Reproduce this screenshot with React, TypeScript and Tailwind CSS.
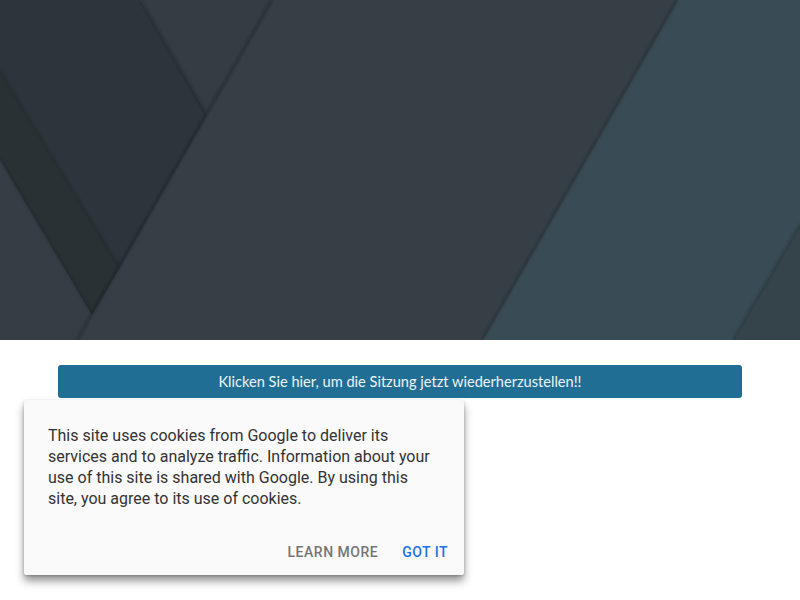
import React from "react";

function Hero() {
  return (
    <div className="w-full h-[340px] bg-[#353f45]">
      <svg width="100%" height="340" viewBox="0 0 800 340" preserveAspectRatio="none" className="block">
        <defs>
          <filter id="soft" x="-10%" y="-10%" width="120%" height="120%">
            <feGaussianBlur stdDeviation="1.5" />
          </filter>
        </defs>
        <rect x="0" y="0" width="800" height="340" fill="#353f45" />
        <polygon points="0,0 140,0 207,115 120,267 0,70" fill="#2c353b" />
        <polygon points="0,70 120,267 92,315 0,160" fill="#293135" />
        <polygon points="0,160 92,315 78,340 0,340" fill="#353e44" />
        <polygon points="140,0 273,0 207,115" fill="#343d43" />
        <polygon points="678,0 800,0 800,225 733,340 483,340" fill="#394b54" />
        <polygon points="800,225 800,340 733,340" fill="#35444b" />
        <g filter="url(#soft)">
          <line x1="272" y1="0" x2="77" y2="340" stroke="#000" strokeOpacity="0.22" strokeWidth="3" />
          <line x1="141" y1="0" x2="206" y2="113" stroke="#000" strokeOpacity="0.18" strokeWidth="3" />
          <line x1="677" y1="0" x2="482" y2="340" stroke="#000" strokeOpacity="0.18" strokeWidth="3" />
          <line x1="0" y1="159" x2="92" y2="314" stroke="#000" strokeOpacity="0.14" strokeWidth="3" />
          <line x1="0" y1="69" x2="119" y2="266" stroke="#000" strokeOpacity="0.1" strokeWidth="3" />
          <line x1="800" y1="224" x2="733" y2="339" stroke="#000" strokeOpacity="0.14" strokeWidth="3" />
        </g>
      </svg>
    </div>
  );
}

export default function App() {
  return (
    <div className="relative w-full h-[600px] bg-white overflow-hidden">
      <Hero />
      <div className="px-[58px] pt-[25px]">
        <div className="h-[33px] rounded-[3px] bg-[#206e94] flex items-center justify-center text-[14.6px] text-[#eef4f7] font-['Lato','Liberation_Sans',sans-serif]">
          Klicken Sie hier, um die Sitzung jetzt wiederherzustellen!!
        </div>
      </div>
      <div className="absolute left-[24px] top-[400px] w-[440px] h-[175px] bg-[#fafafa] rounded-[2px] shadow-[0_6px_9px_rgba(0,0,0,0.42),0_1px_3px_rgba(0,0,0,0.2)] font-['Roboto','Liberation_Sans',sans-serif] flex flex-col">
        <p className="px-6 pt-[25px] text-[16px] leading-[21px] text-[#333333]">
          This site uses cookies from Google to deliver its services and to analyze traffic. Information about your use of this site is shared with Google. By using this site, you agree to its use of cookies.
        </p>
        <div className="mt-auto flex justify-end gap-2 px-2 pb-[5px]">
          <button className="h-9 px-2 text-[14px] font-medium tracking-[0.5px] text-[#757575]">LEARN MORE</button>
          <button className="h-9 px-2 text-[14px] font-medium tracking-[0.5px] text-[#1a73e8]">GOT IT</button>
        </div>
      </div>
    </div>
  );
}
